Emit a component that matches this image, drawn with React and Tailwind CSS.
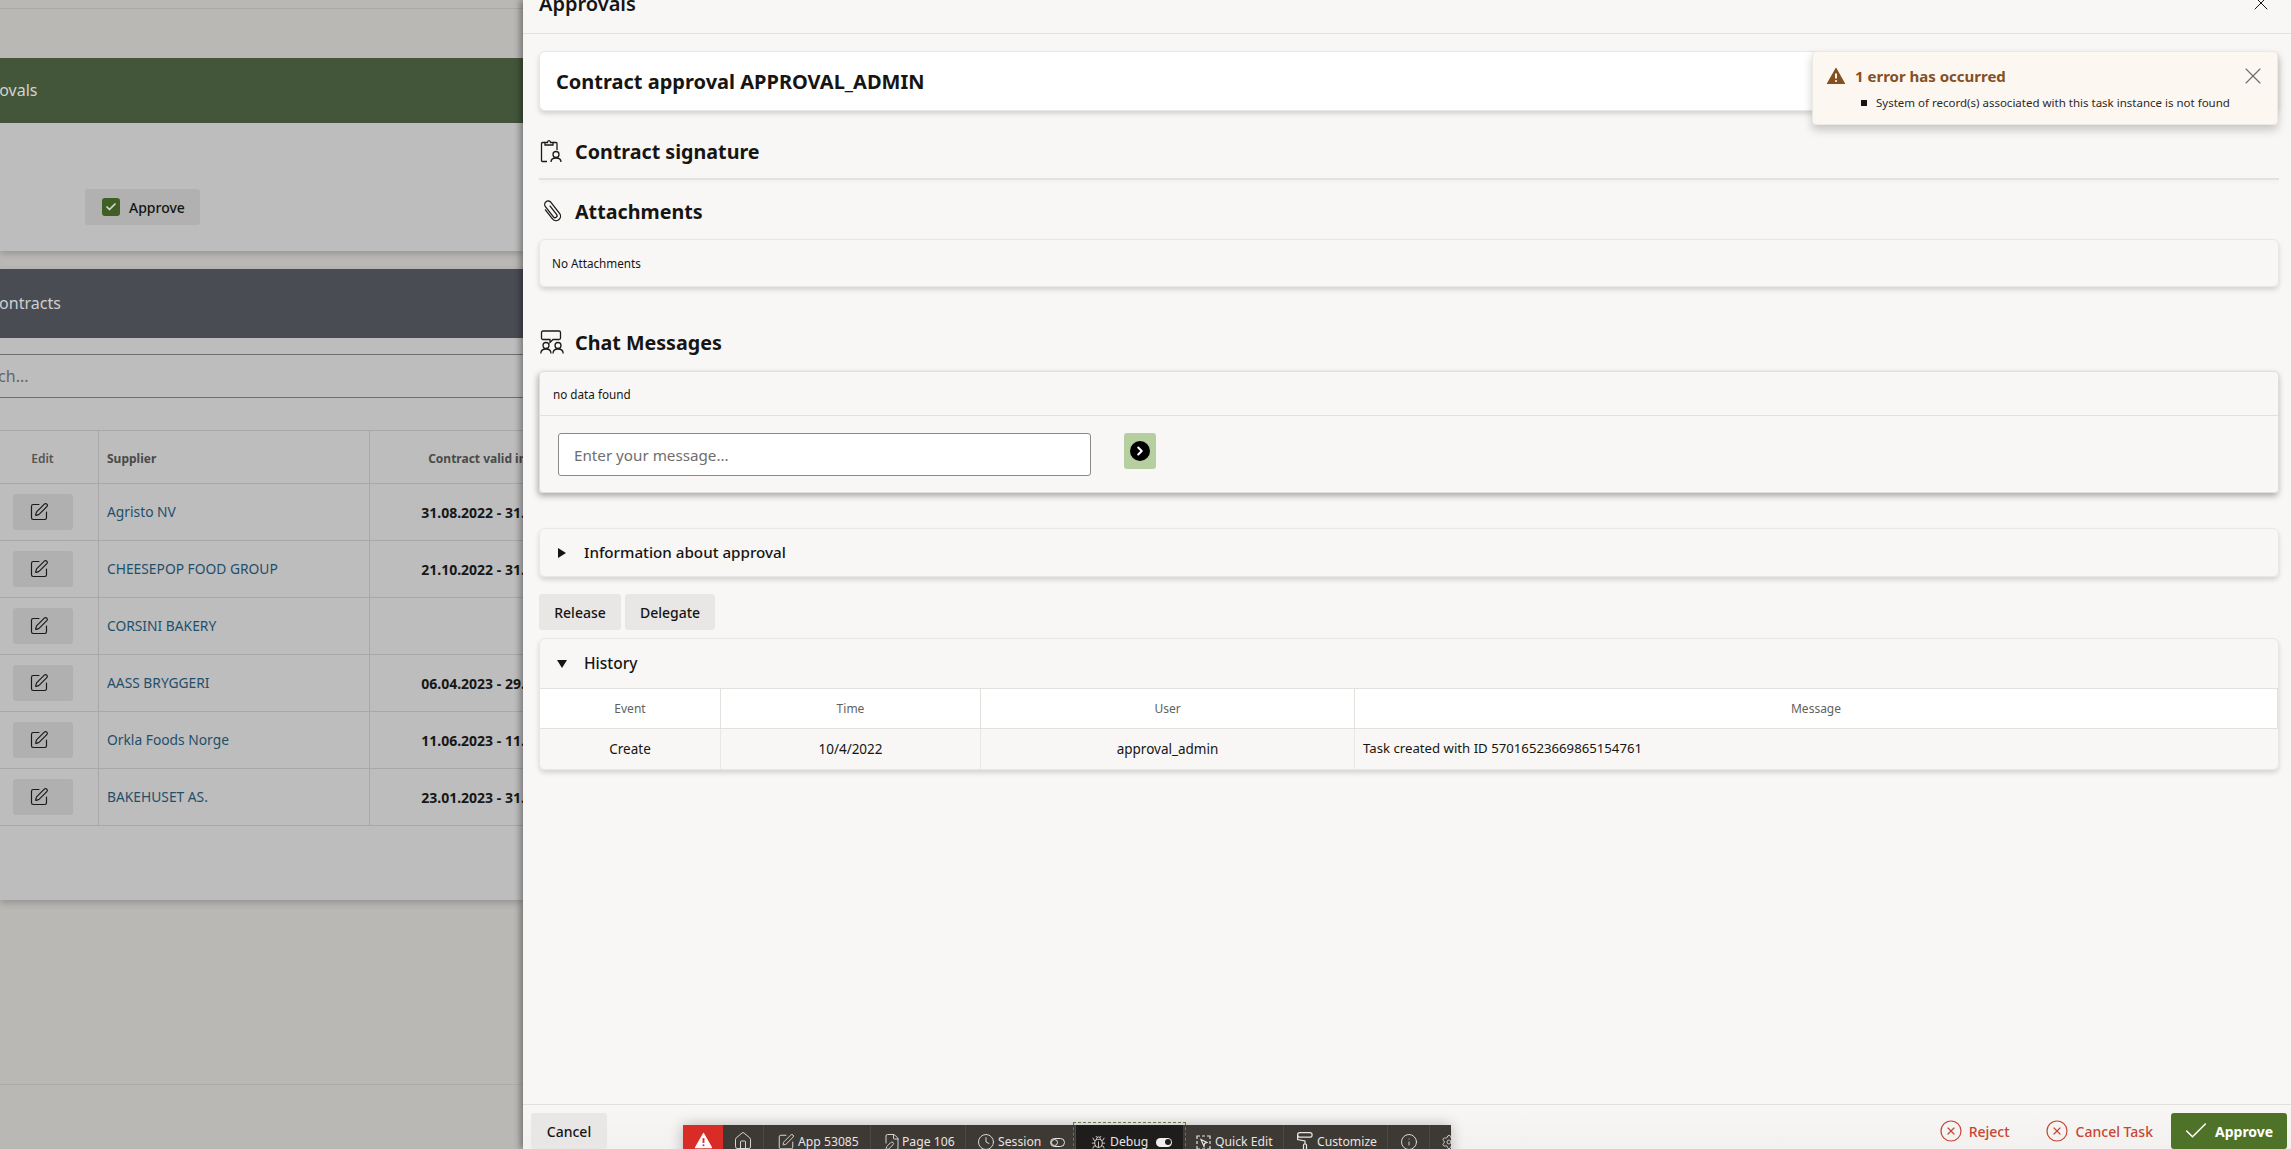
import { Bug, Check, ChevronRight, CircleX, Clock, FilePen, House, Info, Settings, SquarePen, X } from 'lucide-react';

const suppliers = [
  { name: 'Agristo NV', valid: '31.08.2022 - 31.08.2023' },
  { name: 'CHEESEPOP FOOD GROUP', valid: '21.10.2022 - 31.12.2023' },
  { name: 'CORSINI BAKERY', valid: '' },
  { name: 'AASS BRYGGERI', valid: '06.04.2023 - 29.04.2024' },
  { name: 'Orkla Foods Norge', valid: '11.06.2023 - 11.06.2024' },
  { name: 'BAKEHUSET AS.', valid: '23.01.2023 - 31.12.2023' },
];

function ClipboardUser() {
  return (
    <svg width="22" height="24" viewBox="0 0 22 24" fill="none" stroke="#1c1b19" strokeWidth="1.3">
      <path d="M5 3.500H2.500A1 1 0 0 0 1.500 4.500V21.500A1 1 0 0 0 2.500 22.500H7" />
      <path d="M13 3.500H16A1 1 0 0 1 17 4.500V11" />
      <path d="M5 6V3.500H7.500C7.500 1 10.500 1 10.500 3.500H13V6Z" />
      <circle cx="16" cy="15.500" r="3" />
      <path d="M11 23C11 20 13 19 16 19S21 20 21 23" />
    </svg>
  );
}

function PaperclipIcon() {
  return (
    <svg width="24" height="24" viewBox="0 0 24 24" fill="none" stroke="#1c1b19" strokeWidth="1.3" strokeLinecap="round">
      <g transform="rotate(-38 12 12)">
        <path d="M7.500 7V18.500A4.500 4.500 0 0 0 16.500 18.500V4.500A3.500 3.500 0 0 0 9.500 4.500V17.500A2 2 0 0 0 13.500 17.500V7" />
      </g>
    </svg>
  );
}

function ChatUsers() {
  return (
    <svg width="24" height="24" viewBox="0 0 24 24" fill="none" stroke="#1c1b19" strokeWidth="1.3">
      <path d="M3 1H19A1.500 1.500 0 0 1 20.500 2.500V8A1.500 1.500 0 0 1 19 9.500H13L10 12.500V9.500H3A1.500 1.500 0 0 1 1.500 8V2.500A1.500 1.500 0 0 1 3 1Z" />
      <circle cx="6" cy="15.500" r="3" />
      <circle cx="18" cy="15.500" r="3" />
      <path d="M.8 23.500C.8 20 3 19 6 19S11 20 11 23.500" />
      <path d="M13 23.500C13 20 15 19 18 19S23.200 20 23.200 23.500" />
    </svg>
  );
}

function WarnTriangle({ size, fill, mark }) {
  return (
    <svg width={size} height={size} viewBox="0 0 18 18">
      <path d="M9 1.500L17.500 16.500H.5Z" fill={fill} stroke={fill} strokeWidth="1.200" strokeLinejoin="round" />
      <path d="M9 6.500V11.500" stroke={mark} strokeWidth="2" />
      <circle cx="9" cy="14" r="1.100" fill={mark} />
    </svg>
  );
}

function RollerIcon() {
  return (
    <svg width="16" height="20" viewBox="0 0 16 20" fill="none" stroke="#e8e5e2" strokeWidth="1.200">
      <rect x=".6" y=".6" width="14.500" height="4.500" rx="2.200" />
      <path d="M1 3H.6V7.500L8 9V12" />
      <rect x="6.500" y="12" width="3" height="8" rx="1" />
    </svg>
  );
}

function QuickEditIcon() {
  return (
    <svg width="15" height="15" viewBox="0 0 15 15" fill="none" stroke="#e8e5e2" strokeWidth="1.200">
      <path d="M1 4V1H4M6 1H9M11 1H14V4M14 6V9M14 11V14H11M9 14H6M4 14H1V11M1 9V6" />
      <path d="M5 4.500L11 7.500L8.500 8.500L8 11.500Z" />
    </svg>
  );
}

function ToolItem({ className, children }) {
  return <div className={`flex h-full items-center border-r border-[#4c4844] ${className}`}>{children}</div>;
}

function DevToolbar() {
  return (
    <div className="absolute left-[683px] top-[1125px] flex h-[34px] w-[768px] bg-[#3d3935] text-[12.200px] text-[#e8e5e2] shadow-[0_0_14px_rgba(0,0,0,0.25)]">
      <div className="flex w-[40px] justify-center bg-[#da2c27] pt-[7px]">
        <WarnTriangle size={17} fill="#ffffff" mark="#da2c27" />
      </div>
      <ToolItem className="w-[41px] justify-center pb-[2px]"><House size={20} strokeWidth={1.100} /></ToolItem>
      <ToolItem className="w-[107px] gap-[3px] pl-[13px]"><SquarePen size={18} strokeWidth={1.200} />App 53085</ToolItem>
      <ToolItem className="w-[95px] gap-[1px] pl-[12px]"><FilePen size={18} strokeWidth={1.200} />Page 106</ToolItem>
      <ToolItem className="w-[110px] pl-[11px]">
        <Clock size={18} strokeWidth={1.200} />
        <span className="ml-[3px]">Session</span>
        <span className="ml-[9px] flex h-[9px] w-[15px] items-center rounded-full border border-[#e8e5e2]">
          <span className="h-[7px] w-[7px] rounded-full border border-[#e8e5e2]" />
        </span>
      </ToolItem>
      <div className="relative flex h-full w-[107px] items-center bg-[#1f1d1b] pl-[15px] outline outline-offset-2 outline-dashed outline-[#5f7f45]">
        <Bug size={15} strokeWidth={1.300} />
        <span className="ml-[4px]">Debug</span>
        <span className="ml-[8px] flex h-[9px] w-[16px] items-center justify-end rounded-full bg-[#f2f0ee] pr-[1px]">
          <span className="h-[6px] w-[6px] rounded-full bg-[#1f1d1b]" />
        </span>
      </div>
      <ToolItem className="w-[101px] gap-[4px] pl-[13px]"><QuickEditIcon />Quick Edit</ToolItem>
      <ToolItem className="w-[104px] gap-[4px] pl-[13px]"><RollerIcon />Customize</ToolItem>
      <ToolItem className="w-[42px] justify-center"><Info size={18} strokeWidth={1.200} /></ToolItem>
      <div className="flex h-full w-[21px] items-center pl-[11px]"><span className="shrink-0"><Settings size={16} strokeWidth={1.200} /></span></div>
    </div>
  );
}

function BackgroundPage() {
  return (
    <div className="flex h-full w-[523px] shrink-0 flex-col overflow-hidden bg-[#b9b8b5]">
      <div className="h-[9px] shrink-0 border-b border-[#a9a8a6]" />
      <div className="mt-[49px] flex h-[65px] shrink-0 items-center bg-[#43563a] text-[16px] text-[#d3d3cf]">
        <span className="-ml-[37px] -mt-[1px]">Approvals</span>
      </div>
      <div className="h-[128px] shrink-0 bg-[#bdbdbd] pl-[85px] pt-[66px] shadow-[0_3px_6px_rgba(0,0,0,0.18)]">
        <div className="flex h-[36px] w-[115px] items-center rounded-[3px] bg-[#b1b1b1] pl-[17px] text-[14px] font-medium text-[#141414]">
          <span className="flex h-[18px] w-[18px] items-center justify-center rounded-[3px] bg-[#3f5f25]">
            <Check size={12} strokeWidth={3.500} className="text-[#d8d8d8]" />
          </span>
          <span className="ml-[9px]">Approve</span>
        </div>
      </div>
      <div className="mt-[18px] flex h-[631px] shrink-0 flex-col bg-[#bdbdbd] shadow-[0_3px_7px_rgba(0,0,0,0.2)]">
        <div className="flex h-[69px] shrink-0 items-center bg-[#4a4c54] text-[16px] text-[#cfcfcf]">
          <span className="-ml-[11px] -mt-[1px]">Contracts</span>
        </div>
        <div className="mt-[16px] flex h-[44px] shrink-0 items-center border-y border-[#6f6f6f] text-[16px] text-[#666]">
          <span className="-ml-[35px]">Search...</span>
        </div>
        <div className="mt-[32px] grid grid-cols-[99px_271px_260px] border-t border-[#a8a8a8] text-[13.800px]">
          <div className="flex h-[53px] items-center justify-center border-r border-b border-[#a8a8a8] pr-[13px] pt-[3px] text-[12px] font-semibold text-[#555]">Edit</div>
          <div className="flex h-[53px] items-center border-r border-b border-[#a8a8a8] pl-[8px] pt-[3px] text-[12px] font-bold text-[#4a4a4a]">Supplier</div>
          <div className="flex h-[53px] items-center justify-center whitespace-nowrap border-b border-[#a8a8a8] pr-[10px] pt-[3px] text-[12px] font-bold text-[#4a4a4a]">Contract valid interval</div>
          {suppliers.map((s) => [
            <div key={`${s.name}-e`} className="flex h-[57px] items-center border-r border-b border-[#a8a8a8] pl-[13px]">
              <span className="flex h-[36px] w-[60px] items-center justify-center rounded-[3px] bg-[#b0b0b0] pr-[9px]">
                <SquarePen size={20} strokeWidth={1.400} className="text-[#1a1a1a]" />
              </span>
            </div>,
            <div key={`${s.name}-n`} className="flex h-[57px] items-center border-r border-b border-[#a8a8a8] pl-[8px] text-[#1f4f6b]">{s.name}</div>,
            <div key={`${s.name}-v`} className="flex h-[57px] items-center justify-center whitespace-nowrap border-b border-[#a8a8a8] pr-[2px] text-[14px] font-bold text-[#171717]">{s.valid}</div>,
          ])}
        </div>
      </div>
      <div className="mt-[184px] border-t border-[#adaca9]" />
    </div>
  );
}

function SectionTitle({ icon, children }) {
  return (
    <div className="flex h-[24px] items-center text-[19.700px] font-bold text-[#161513]">
      <span className="flex w-[36px] shrink-0 items-center pl-[1px]">{icon}</span>
      <span className="pt-[2px]">{children}</span>
    </div>
  );
}

const cardClass = 'rounded-[6px] border border-[#e9e7e4] shadow-[0_3px_5px_rgba(0,0,0,0.14)]';

function Drawer() {
  return (
    <div className="relative z-10 flex h-full flex-1 flex-col bg-[#f8f7f5] shadow-[-3px_0_6px_rgba(0,0,0,0.35)]">
      <div className="relative flex h-[34px] shrink-0 border-b border-[#e3e1de] pl-[16px]">
        <div className="flex h-[8px] items-center text-[20px] font-semibold text-[#161513]">Approvals</div>
        <X size={24} strokeWidth={1} className="absolute right-[18px] -top-[9px] text-[#161513]" />
      </div>

      <div className="flex flex-col pl-[16px] pr-[12px]">
        <div className={`mt-[17px] flex h-[60px] items-center bg-white pl-[16px] pt-[1px] text-[20px] font-bold text-[#161513] ${cardClass}`}>
          Contract approval APPROVAL_ADMIN
        </div>

        <div className="mt-[28px]">
          <SectionTitle icon={<ClipboardUser />}>Contract signature</SectionTitle>
        </div>
        <div className="mt-[15px] h-[2px] bg-[#e4e2df] shadow-[0_2px_4px_rgba(0,0,0,0.05)]" />

        <div className="mt-[19px]">
          <SectionTitle icon={<PaperclipIcon />}>Attachments</SectionTitle>
        </div>
        <div className={`mt-[16px] flex h-[48px] items-center pl-[12px] pt-[1px] text-[11.700px] text-[#161513] ${cardClass}`}>No Attachments</div>

        <div className="mt-[43px]">
          <SectionTitle icon={<ChatUsers />}>Chat Messages</SectionTitle>
        </div>
        <div className="mt-[17px] h-[122px] rounded-[4px] border border-[#e0dedb] shadow-[-1px_3px_6px_rgba(0,0,0,0.32)]">
          <div className="flex h-[44px] items-center border-b border-[#e3e1de] pl-[13px] pt-[2px] text-[11.700px] text-[#161513]">no data found</div>
          <div className="flex pl-[18px] pt-[17px]">
            <input
              type="text"
              placeholder="Enter your message..."
              className="h-[43px] w-[533px] rounded-[3px] border border-[#8b8a88] bg-white px-[15px] text-[15.200px] outline-none placeholder:text-[#6f6e6c]"
            />
            <button type="button" className="ml-[33px] flex h-[36px] w-[32px] items-center justify-center rounded-[3px] bg-[#b5cfa0]">
              <span className="flex h-[20px] w-[20px] items-center justify-center rounded-full bg-black">
                <ChevronRight size={14} strokeWidth={3.500} className="text-white" />
              </span>
            </button>
          </div>
        </div>

        <div className={`mt-[35px] flex h-[49px] items-center text-[15.200px] font-medium text-[#161513] ${cardClass}`}>
          <span className="ml-[18px] h-0 w-0 border-y-[5px] border-l-[8px] border-y-transparent border-l-[#161513]" />
          <span className="ml-[18px]">Information about approval</span>
        </div>

        <div className="mt-[17px] flex gap-[4px] text-[14px] font-medium text-[#161513]">
          <button type="button" className="h-[36px] w-[82px] rounded-[3px] bg-[#e8e7e5]">Release</button>
          <button type="button" className="h-[36px] w-[90px] rounded-[3px] bg-[#e8e7e5]">Delegate</button>
        </div>

        <div className={`mt-[8px] overflow-hidden ${cardClass}`}>
          <div className="flex h-[49px] items-center text-[15.500px] font-medium text-[#161513]">
            <span className="ml-[17px] h-0 w-0 border-x-[5px] border-t-[8px] border-x-transparent border-t-[#161513]" />
            <span className="ml-[17px]">History</span>
          </div>
          <div className="grid grid-cols-[181px_260px_374px_1fr] text-center">
            {['Event', 'Time', 'User', 'Message'].map((h) => (
              <div key={h} className="flex h-[41px] items-center justify-center border-y border-r border-[#e3e1de] bg-white text-[12px] text-[#636260] last:border-r-0">{h}</div>
            ))}
            <div className="flex h-[40px] items-center justify-center border-r border-[#e9e7e4] text-[13.500px] text-[#161513]">Create</div>
            <div className="flex h-[40px] items-center justify-center border-r border-[#e9e7e4] text-[13.500px] text-[#161513]">10/4/2022</div>
            <div className="flex h-[40px] items-center justify-center border-r border-[#e9e7e4] text-[13.500px] text-[#161513]">approval_admin</div>
            <div className="flex h-[40px] items-center pl-[8px] text-[13.200px] text-[#161513]">Task created with ID 57016523669865154761</div>
          </div>
        </div>
      </div>

      <div className="mt-auto flex h-[45px] shrink-0 justify-between border-t border-[#e3e1de] bg-gradient-to-b from-[#f8f7f5] to-[#f2f1ef] pl-[8px] pr-[4px] pt-[8px] text-[14px] font-medium">
        <button type="button" className="h-[36px] w-[76px] rounded-[3px] bg-[#e8e7e5] text-[#161513]">Cancel</button>
        <div className="flex items-start text-[#c74634]">
          <span className="flex h-[36px] items-center gap-[6px]"><CircleX size={24} strokeWidth={1.200} />Reject</span>
          <span className="ml-[35px] flex h-[36px] items-center gap-[7px]"><CircleX size={24} strokeWidth={1.200} />Cancel Task</span>
          <button type="button" className="ml-[18px] flex h-[36px] w-[116px] items-center gap-[5px] rounded-[3px] bg-[#4f7229] pl-[11px] font-bold text-white">
            <Check size={28} strokeWidth={1.300} />Approve
          </button>
        </div>
      </div>

      <div className="absolute left-[1289px] top-[51px] h-[74px] w-[466px] rounded-[4px] border border-[#ece8e3] bg-[#fdf7f2] shadow-[0_5px_10px_rgba(0,0,0,0.2)]">
        <span className="absolute left-[14px] top-[15px]"><WarnTriangle size={18} fill="#85501f" mark="#fdf7f2" /></span>
        <span className="absolute left-[42px] top-[12px] text-[15px] font-bold leading-[24px] text-[#85501f]">1 error has occurred</span>
        <X size={28} strokeWidth={1} className="absolute right-[10px] top-[10px] text-[#6f6e6c]" />
        <div className="absolute left-[48px] top-[41px] flex items-center text-[11.500px] leading-[20px] text-[#2a2927]">
          <span className="h-[6px] w-[6px] bg-[#161513]" />
          <span className="ml-[9px]">System of record(s) associated with this task instance is not found</span>
        </div>
      </div>
    </div>
  );
}

export default function App() {
  return (
    <div className="relative flex h-[1149px] w-[2291px] overflow-hidden font-['Noto_Sans',sans-serif]">
      <BackgroundPage />
      <Drawer />
      <div className="absolute inset-0 z-20 pointer-events-none">
        <DevToolbar />
      </div>
    </div>
  );
}
